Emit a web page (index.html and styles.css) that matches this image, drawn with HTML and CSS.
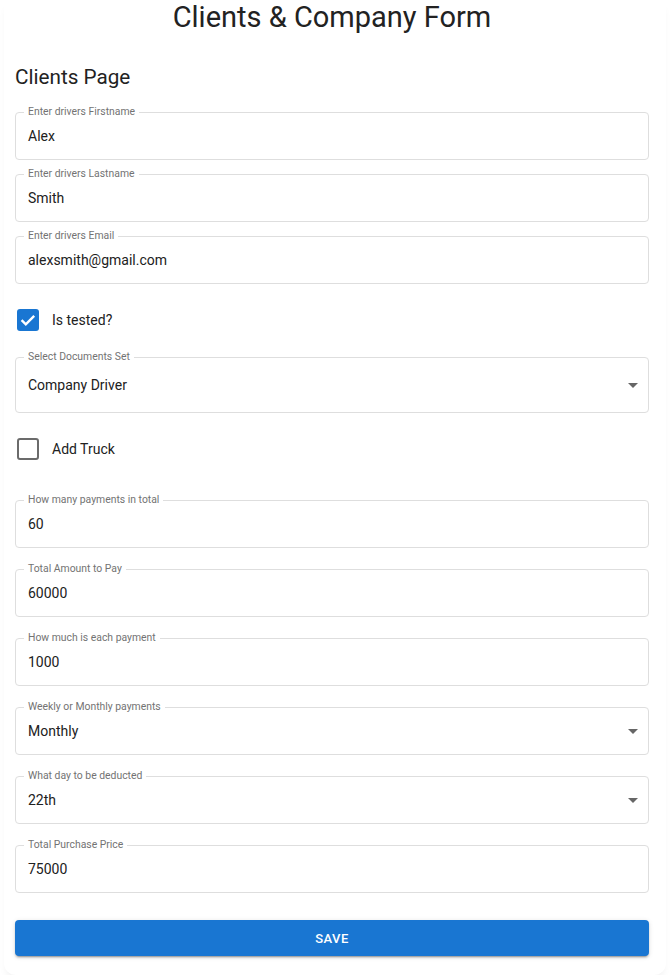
FILE: index.html
```html
<!DOCTYPE html>
<html lang="en">
<head>
<meta charset="utf-8">
<title>Clients & Company Form</title>
<link rel="stylesheet" href="styles.css">
</head>
<body>
<div class="page">
  <h1 class="title">Clients &amp; Company Form</h1>
  <h2 class="section">Clients Page</h2>
  <form class="form">
    <fieldset class="field first">
      <legend>Enter drivers Firstname</legend>
      <div class="value">Alex</div>
    </fieldset>
    <fieldset class="field tight">
      <legend>Enter drivers Lastname</legend>
      <div class="value">Smith</div>
    </fieldset>
    <fieldset class="field tight">
      <legend>Enter drivers Email</legend>
      <div class="value">alexsmith@gmail.com</div>
    </fieldset>

    <div class="check-row">
      <svg class="box" width="22" height="22" viewBox="0 0 22 22"><rect x="0" y="0" width="22" height="22" rx="3" fill="#1976d2"/><path d="M4.6 11.2l4.2 4.2 8.4-8.6" fill="none" stroke="#fff" stroke-width="2.4"/></svg>
      <span class="check-label">Is tested?</span>
    </div>

    <fieldset class="field select tall">
      <legend>Select Documents Set</legend>
      <div class="value">Company Driver<svg class="arrow" width="10" height="5" viewBox="0 0 10 5"><path d="M0 0l5 5 5-5z" fill="#666"/></svg></div>
    </fieldset>

    <div class="check-row">
      <span class="box empty"></span>
      <span class="check-label">Add Truck</span>
    </div>

    <fieldset class="field group">
      <legend>How many payments in total</legend>
      <div class="value">60</div>
    </fieldset>
    <fieldset class="field loose">
      <legend>Total Amount to Pay</legend>
      <div class="value">60000</div>
    </fieldset>
    <fieldset class="field loose">
      <legend>How much is each payment</legend>
      <div class="value">1000</div>
    </fieldset>
    <fieldset class="field loose select">
      <legend>Weekly or Monthly payments</legend>
      <div class="value">Monthly<svg class="arrow" width="10" height="5" viewBox="0 0 10 5"><path d="M0 0l5 5 5-5z" fill="#666"/></svg></div>
    </fieldset>
    <fieldset class="field loose select">
      <legend>What day to be deducted</legend>
      <div class="value">22th<svg class="arrow" width="10" height="5" viewBox="0 0 10 5"><path d="M0 0l5 5 5-5z" fill="#666"/></svg></div>
    </fieldset>
    <fieldset class="field loose">
      <legend>Total Purchase Price</legend>
      <div class="value">75000</div>
    </fieldset>

    <button type="button" class="save">SAVE</button>
  </form>
</div>
</body>
</html>
```
FILE: styles.css
```css
* { box-sizing: border-box; }
html, body { margin: 0; padding: 0; background: #fff; }
body {
  font-family: Roboto, "Liberation Sans", Arial, sans-serif;
  color: #212121;
}
.page {
  margin: 0 4px;
  padding: 0 17px 19px 11px;
  border-radius: 0 0 12px 12px;
  box-shadow: 0 6px 10px -4px rgba(0, 0, 0, 0.09);
}
.title {
  margin: 0;
  font-size: 29px;
  line-height: 35px;
  font-weight: 400;
  text-align: center;
  color: #222;
}
.section {
  margin: 30px 0 0;
  font-size: 20.7px;
  line-height: 24px;
  font-weight: 400;
  color: #222;
}
.form {
  display: flex;
  flex-direction: column;
}
.field {
  margin: 0;
  padding: 0 8px;
  border: 1px solid #dedede;
  border-radius: 4px;
  min-width: 0;
}
.field legend {
  font-size: 10.4px;
  line-height: 12px;
  padding: 0 4px;
  color: #737373;
}
.field .value {
  display: flex;
  align-items: center;
  justify-content: space-between;
  padding: 8px 0 13px 4px;
  font-size: 14px;
  line-height: 20px;
  color: #212121;
}
.field.tall .value {
  padding-top: 12px;
  padding-bottom: 17px;
}
.arrow { margin-right: 2px; }
.first { margin-top: 17px; }
.tight { margin-top: 8px; }
.loose { margin-top: 15px; }
.group { margin-top: 24px; }
.tall { margin-top: 10px; }

.check-row {
  display: flex;
  align-items: center;
  height: 42px;
  margin-top: 15px;
}
.box {
  width: 22px;
  height: 22px;
  margin-left: 2px;
  flex: none;
}
.box.empty {
  display: block;
  border: 2px solid #6b6b6b;
  border-radius: 3px;
}
.check-label {
  margin-left: 13px;
  font-size: 14px;
  line-height: 20px;
  color: #212121;
}
.save {
  margin-top: 27px;
  height: 36px;
  border: 0;
  border-radius: 4px;
  background: #1976d2;
  color: #fff;
  font-family: Roboto, "Liberation Sans", Arial, sans-serif;
  font-size: 13px;
  font-weight: 500;
  letter-spacing: 0.4px;
  box-shadow: 0 3px 1px -2px rgba(0,0,0,.2), 0 2px 2px 0 rgba(0,0,0,.14), 0 1px 5px 0 rgba(0,0,0,.12);
}
```
